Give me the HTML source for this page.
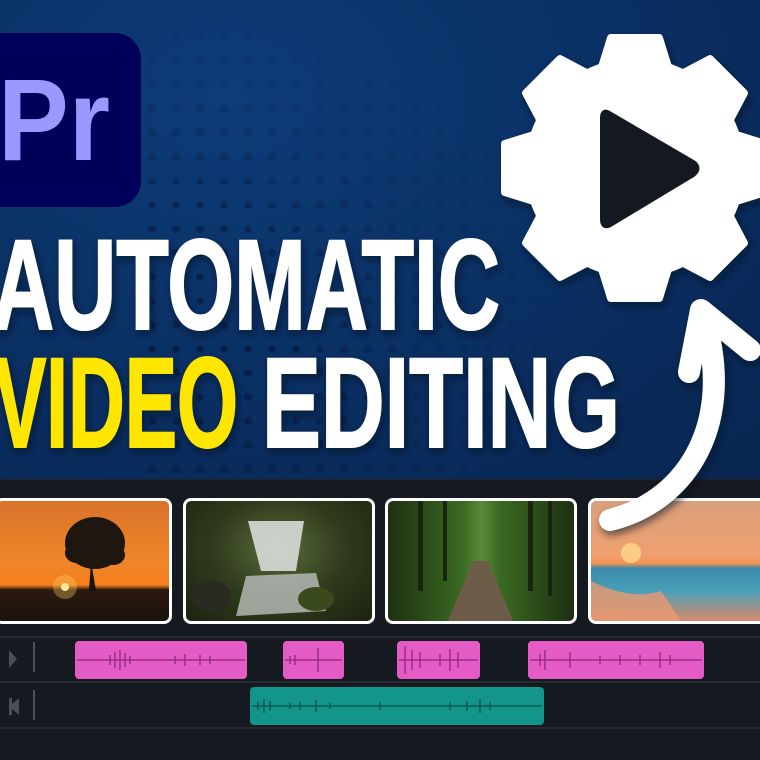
<!DOCTYPE html>
<html><head><meta charset="utf-8"><style>
html,body{margin:0;padding:0;width:760px;height:760px;overflow:hidden;background:#151920}
.blue{position:absolute;left:0;top:0;width:760px;height:479px;background:radial-gradient(ellipse at 30% 20%,#0d3c78 0%,#0a2f62 55%,#082550 100%)}
.dots{position:absolute;left:140px;top:25px;width:400px;height:450px;background-image:radial-gradient(circle,rgba(0,10,40,.35) 3.5px,transparent 4.5px);background-size:24px 24px;-webkit-mask-image:radial-gradient(ellipse at 10% 70%,#000 20%,transparent 75%)}
.pr{position:absolute;left:-30px;top:33px;width:171px;height:174px;background:#00005b;border-radius:26px}
.thumb{position:absolute;top:498px;height:120px;border:3px solid #fff;border-radius:8px;overflow:hidden}
.line{position:absolute;left:0;width:760px;height:2px;background:#252a33}
</style></head><body>
<div class="blue"></div>
<div class="dots"></div>
<div class="pr"></div>
<svg width="760" height="760" style="position:absolute;left:0;top:0" xmlns="http://www.w3.org/2000/svg">
<defs><filter id="sh" x="-20%" y="-20%" width="140%" height="140%"><feDropShadow dx="2" dy="4" stdDeviation="4" flood-color="#000820" flood-opacity=".6"/></filter></defs>
<text x="-2" y="160" font-family="Liberation Sans, sans-serif" font-weight="bold" font-size="116" fill="#9999ff" textLength="112" lengthAdjust="spacingAndGlyphs">Pr</text>
<g font-family="Liberation Sans Narrow, Liberation Sans, sans-serif" font-weight="bold" font-size="128" filter="url(#sh)" stroke-width="2" >
<text x="-8" y="329" fill="#fff" stroke="#fff" textLength="508" lengthAdjust="spacingAndGlyphs">AUTOMATIC</text>
<text x="-6" y="447" fill="#ffe600" stroke="#ffe600" textLength="244" lengthAdjust="spacingAndGlyphs">VIDEO</text>
<text x="262" y="447" fill="#fff" stroke="#fff" textLength="358" lengthAdjust="spacingAndGlyphs">EDITING</text>
</g>
<g filter="url(#sh)" fill="#fff" stroke="#fff" stroke-width="8" stroke-linejoin="round">
<circle cx="635" cy="168" r="106"/>
<g id="t"><path d="M598,80 L611,38 L659,38 L672,80 Z"/></g>
<use href="#t" transform="rotate(45 635 168)"/>
<use href="#t" transform="rotate(90 635 168)"/>
<use href="#t" transform="rotate(135 635 168)"/>
<use href="#t" transform="rotate(180 635 168)"/>
<use href="#t" transform="rotate(225 635 168)"/>
<use href="#t" transform="rotate(270 635 168)"/>
<use href="#t" transform="rotate(315 635 168)"/>
</g>
<path d="M609,114 Q603,110 603,118 L603,219 Q603,228 610,224 L693,174 Q700,168 693,163 Z" fill="#141820" stroke="#141820" stroke-width="6" stroke-linejoin="round"/>
</svg>

<div class="line" style="top:479px;height:1px;background:#1d222a"></div>
<div class="thumb" style="left:-6px;width:172px;background:linear-gradient(180deg,#d9732c 0%,#f0862a 50%,#f57f1c 70%,#2a1a10 74%,#1b130d 100%)">
<svg width="172" height="120" style="position:absolute;left:0;top:0"><circle cx="68" cy="86" r="4" fill="#fff6c0"/><circle cx="68" cy="86" r="12" fill="#ffcf60" opacity=".35"/><path d="M92,90 L94,60 L99,90 Z" fill="#1a120c"/><ellipse cx="98" cy="42" rx="30" ry="26" fill="#1f1610"/><ellipse cx="80" cy="52" rx="12" ry="10" fill="#1f1610"/><ellipse cx="116" cy="54" rx="12" ry="10" fill="#1f1610"/></svg>
</div>
<div class="thumb" style="left:183px;width:186px;background:radial-gradient(ellipse at 50% 40%,#5b6c3e 0%,#2f3b1c 50%,#1b2210 100%)">
<svg width="186" height="120" style="position:absolute;left:0;top:0"><path d="M62,20 L118,20 L110,70 L75,70 Z" fill="#d8dcd8" opacity=".9"/><path d="M60,75 L130,72 L140,110 L50,115 Z" fill="#b9c0bd" opacity=".8"/><ellipse cx="130" cy="98" rx="18" ry="12" fill="#3a4a1c"/><ellipse cx="25" cy="95" rx="20" ry="15" fill="#2a2a22"/></svg>
</div>
<div class="thumb" style="left:385px;width:186px;background:linear-gradient(90deg,#1d3012 0%,#3a6a22 40%,#5a8a38 50%,#3a6a22 60%,#1d3012 100%)">
<svg width="186" height="120" style="position:absolute;left:0;top:0"><path d="M85,60 L100,60 L125,120 L60,120 Z" fill="#6c5c48"/><rect x="30" y="0" width="5" height="90" fill="#1a2410"/><rect x="55" y="0" width="4" height="80" fill="#1a2410"/><rect x="140" y="0" width="5" height="90" fill="#1a2410"/><rect x="160" y="0" width="4" height="95" fill="#1a2410"/></svg>
</div>
<div class="thumb" style="left:588px;width:180px;background:linear-gradient(180deg,#d9a07c 0%,#f0a070 45%,#f39352 52%,#3a8aa8 56%,#4aa0b8 75%,#d88a68 100%)">
<svg width="180" height="120" style="position:absolute;left:0;top:0"><circle cx="40" cy="52" r="10" fill="#ffe090" opacity=".7"/><path d="M0,80 Q40,100 70,90 L90,120 L0,120Z" fill="#e89a70" opacity=".8"/></svg>
</div>

<div class="line" style="top:636px"></div>
<div class="line" style="top:681px"></div>
<div class="line" style="top:727px"></div>
<svg width="760" height="760" style="position:absolute;left:0;top:0">
<defs><filter id="sh2" x="-20%" y="-20%" width="140%" height="140%"><feDropShadow dx="2" dy="4" stdDeviation="4" flood-color="#000820" flood-opacity=".6"/></filter></defs>
<path d="M9,650 L17,659 L9,668 Z" fill="#4a4f57"/>
<rect x="33" y="642" width="2" height="30" fill="#4a4f57"/>
<path d="M9,698 L12,698 L12,704 L19,698 L19,715 L12,709 L12,715 L9,715 Z" fill="#4a4f57"/>
<rect x="33" y="690" width="2" height="30" fill="#4a4f57"/>
<g fill="#e45bc6">
<rect x="75" y="641" width="172" height="38" rx="4"/>
<rect x="283" y="641" width="61" height="38" rx="4"/>
<rect x="397" y="641" width="83" height="38" rx="4"/>
<rect x="528" y="641" width="176" height="38" rx="4"/>
</g>
<rect x="250" y="687" width="294" height="38" rx="4" fill="#139689"/>
<g stroke="#9a2e82" stroke-width="1.5">
<line x1="77" y1="660" x2="245" y2="660"/><line x1="285" y1="660" x2="342" y2="660"/><line x1="399" y1="660" x2="478" y2="660"/><line x1="530" y1="660" x2="702" y2="660"/>
<path d="M110,655v10M115,652v16M120,650v20M125,653v14M130,656v8M175,656v8M185,654v12M200,655v10M210,656v8M290,656v8M295,655v10M318,648v24M405,646v28M412,650v20M420,652v16M440,654v12M450,649v22M458,652v16M540,654v12M545,650v20M570,652v16M600,656v8M620,655v10M640,655v10M660,652v16M670,655v10"/>
</g>
<g stroke="#0b5a55" stroke-width="1.5">
<line x1="252" y1="706" x2="542" y2="706"/>
<path d="M258,702v8M264,699v14M270,701v10M290,703v6M300,702v8M316,700v12M330,703v6M380,702v8M450,702v8M467,701v10M480,699v14M490,702v8"/>
</g>
<g fill="none" stroke="#fff" stroke-width="22" stroke-linecap="round" stroke-linejoin="round" filter="url(#sh2)">
<path d="M610,520 C690,500 735,420 704,318"/>
<path d="M689,372 L701,310 L750,350"/>
</g>
</svg>
</body></html>
